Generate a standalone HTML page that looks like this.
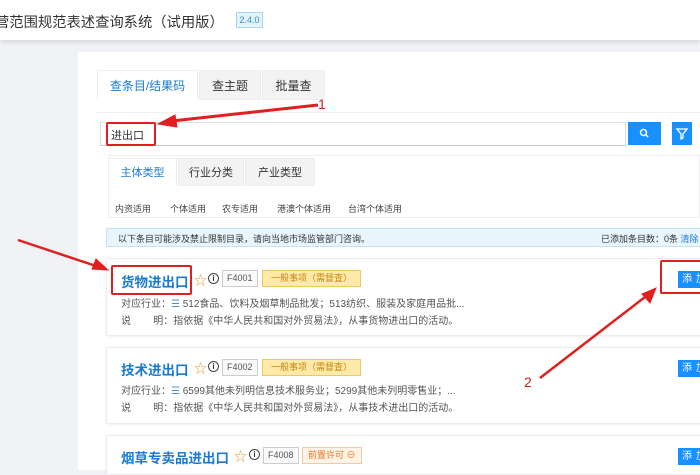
<!DOCTYPE html>
<html><head><meta charset="utf-8"><style>
*{margin:0;padding:0;box-sizing:border-box}
body{width:700px;height:470px;overflow:hidden;background:#f0f2f5;font-family:"Liberation Sans","Noto Sans CJK SC",sans-serif;position:relative;color:#333}
.a{position:absolute;white-space:nowrap}
.hdr{left:0;top:0;width:700px;height:40px;background:#fff;box-shadow:0 2px 5px rgba(0,0,0,.12)}
.blue{color:#1a7ad1}
.tab{height:30px;line-height:30px;text-align:center;font-size:12px;background:#f3f3f3;border:1px solid #eee}
.st{height:28px;line-height:28px;text-align:center;font-size:11px;background:#f3f3f3;border:1px solid #eee}
.card{left:106px;width:600px;background:#fff;border:1px solid #ececec;box-shadow:0 1px 3px rgba(0,0,0,.06)}
.t{font-size:13.5px;font-weight:bold;color:#1a7ad1}
.code{font-size:9px;border:1px solid #ccc;padding:0 4px;height:17px;line-height:15px;color:#555;background:#fafafa}
.ytag{font-size:9px;background:#fde9a8;border:1px solid #f0c860;color:#c68a10;height:17px;line-height:15px;padding:0 8px}
.g{font-size:10px;color:#555}
.add{width:30px;height:17px;background:#1890ff;color:#fff;font-size:10px;line-height:17px;padding-left:4px;letter-spacing:4px}
.red{border:2px solid #e02020;border-radius:2px}
.i{width:11px;height:11px;border:1.3px solid #444;border-radius:50%;font-size:8px;text-align:center;line-height:9px;font-weight:bold}
</style></head><body>
<div class="a hdr"></div>
<div class="a" style="left:-5px;top:11px;font-size:14.3px;color:#333">营范围规范表述查询系统（试用版）</div>
<div class="a" style="left:236px;top:12px;width:27px;height:16px;background:#e3f3fb;border:1px solid #a8d8f0;font-size:9px;color:#3a8fc4;text-align:center;line-height:14px">2.4.0</div>
<div class="a" style="left:78px;top:52px;width:622px;height:418px;background:#fff"></div>
<div class="a tab blue" style="left:97px;top:70px;width:101px;background:#fff;border-bottom-color:#fff">查条目/结果码</div>
<div class="a tab" style="left:199px;top:70px;width:62px">查主题</div>
<div class="a tab" style="left:262px;top:70px;width:63px">批量查</div>
<div class="a" style="left:97px;top:112px;width:603px;height:1px;background:#f0f0f0"></div>
<div class="a" style="left:100px;top:122px;width:526px;height:24px;border:1px solid #ddd;border-bottom-color:#ccc"></div>
<div class="a" style="left:111px;top:127px;font-size:11px">进出口</div>
<div class="a red" style="left:106px;top:122px;width:50px;height:24px"></div>
<div class="a" style="left:628px;top:122px;width:33px;height:23px;background:#1890ff"><svg width="33" height="23"><circle cx="15.5" cy="10.5" r="3" fill="none" stroke="#fff" stroke-width="1.5"/><path d="M17.6 12.6l2.5 2.5" stroke="#fff" stroke-width="1.6"/></svg></div>
<div class="a" style="left:672px;top:122px;width:20px;height:23px;background:#1890ff"><svg width="20" height="23"><path d="M5 7h10l-4 5v4l-2 1v-5z" fill="none" stroke="#fff" stroke-width="1.3"/></svg></div>
<div class="a" style="left:108px;top:155px;width:592px;height:63px;border:1px solid #eee"></div>
<div class="a st blue" style="left:108px;top:158px;width:69px;background:#fff;border-bottom-color:#fff">主体类型</div>
<div class="a st" style="left:178px;top:158px;width:66px">行业分类</div>
<div class="a st" style="left:245px;top:158px;width:70px">产业类型</div>
<div class="a" style="left:115px;top:202px;font-size:9px;color:#444">内资适用</div>
<div class="a" style="left:170px;top:202px;font-size:9px;color:#444">个体适用</div>
<div class="a" style="left:222px;top:202px;font-size:9px;color:#444">农专适用</div>
<div class="a" style="left:277px;top:202px;font-size:9px;color:#444">港澳个体适用</div>
<div class="a" style="left:348px;top:202px;font-size:9px;color:#444">台湾个体适用</div>
<div class="a" style="left:106px;top:228px;width:600px;height:19px;background:#e8f5fc;border:1px solid #c4e4f4"></div>
<div class="a" style="left:118px;top:232px;font-size:9px;color:#333">以下条目可能涉及禁止限制目录，请向当地市场监管部门咨询。</div>
<div class="a" style="left:601px;top:232px;font-size:9px;color:#333">已添加条目数：0条 <span class="blue">清除</span></div>

<div class="a card" style="top:258px;height:78px"></div>
<div class="a t" style="left:121px;top:271px">货物进出口</div>
<div class="a red" style="left:111px;top:265px;width:81px;height:30px"></div>
<div class="a" style="left:194px;top:270px;font-size:13px;color:#e09a40">☆</div>
<div class="a i" style="left:208px;top:273px">i</div>
<div class="a code" style="left:222px;top:270px">F4001</div>
<div class="a ytag" style="left:262px;top:270px">一般事项（需督査）</div>
<div class="a g" style="left:121px;top:295px">对应行业：<span style="color:#4a8fd4">☰</span> 512食品、饮料及烟草制品批发；513纺织、服装及家庭用品批...</div>
<div class="a g" style="left:121px;top:312px">说&nbsp;&nbsp;&nbsp;&nbsp;&nbsp;&nbsp;&nbsp;&nbsp;明：指依据《中华人民共和国对外贸易法》，从事货物进出口的活动。</div>
<div class="a add" style="left:678px;top:271px">添加</div>
<div class="a red" style="left:660px;top:260px;width:44px;height:34px"></div>

<div class="a card" style="top:347px;height:77px"></div>
<div class="a t" style="left:121px;top:359px">技术进出口</div>
<div class="a" style="left:194px;top:358px;font-size:13px;color:#e09a40">☆</div>
<div class="a i" style="left:208px;top:361px">i</div>
<div class="a code" style="left:222px;top:359px">F4002</div>
<div class="a ytag" style="left:262px;top:359px">一般事项（需督査）</div>
<div class="a g" style="left:121px;top:382px">对应行业：<span style="color:#4a8fd4">☰</span> 6599其他未列明信息技术服务业；5299其他未列明零售业；...</div>
<div class="a g" style="left:121px;top:399px">说&nbsp;&nbsp;&nbsp;&nbsp;&nbsp;&nbsp;&nbsp;&nbsp;明：指依据《中华人民共和国对外贸易法》，从事技术进出口的活动。</div>
<div class="a add" style="left:678px;top:360px">添加</div>

<div class="a card" style="top:435px;height:40px"></div>
<div class="a t" style="left:121px;top:447px">烟草专卖品进出口</div>
<div class="a" style="left:234px;top:446px;font-size:13px;color:#e09a40">☆</div>
<div class="a i" style="left:249px;top:449px">i</div>
<div class="a code" style="left:263px;top:447px">F4008</div>
<div class="a" style="left:302px;top:447px;font-size:9px;background:#fff3e8;border:1px solid #f5c9a0;color:#e8741a;height:17px;line-height:15px;padding:0 5px">前置许可 ⊖</div>
<div class="a add" style="left:678px;top:448px">添加</div>

<svg class="a" style="left:0;top:0" width="700" height="470">
<g fill="#e02020" stroke="#e02020">
<path d="M318 105L172 121" stroke-width="3"/><path d="M158 124l17-9 2 12z"/>
<path d="M18 240L96 266" stroke-width="2.5"/><path d="M108 270l-16-1 4-10z"/>
<path d="M540 378L645 297" stroke-width="2.5"/><path d="M656 288l-6 15-8-9z"/>
</g>
<text x="318" y="109" font-size="14" fill="#d02020" font-family="Liberation Sans">1</text>
<text x="524" y="387" font-size="14" fill="#d02020" font-family="Liberation Sans">2</text>
</svg>
</body></html>
